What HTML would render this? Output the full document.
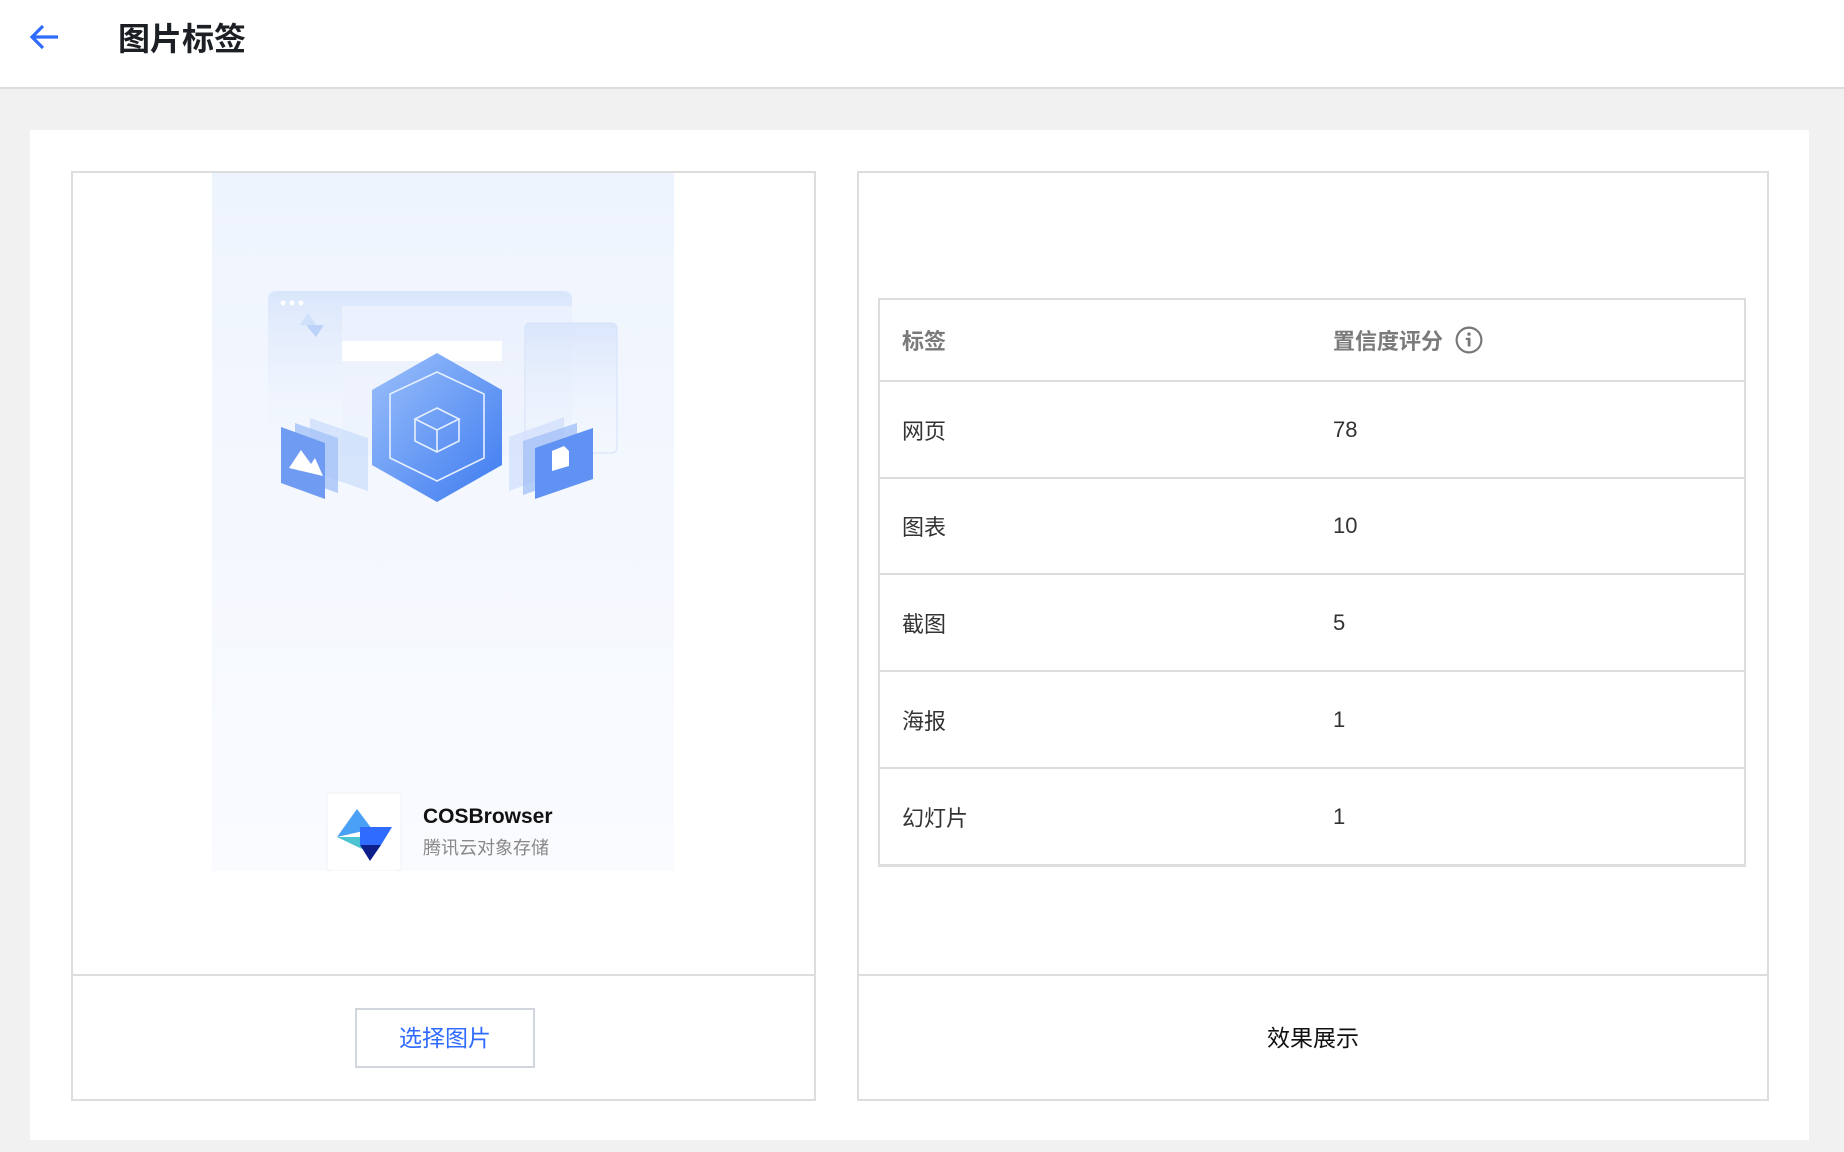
<!DOCTYPE html>
<html><head><meta charset="utf-8"><style>
*{margin:0;padding:0;box-sizing:border-box}
body{width:1844px;height:1152px;background:#f1f1f1;font-family:"Liberation Sans","Noto Sans CJK SC",sans-serif;position:relative;overflow:hidden;color:#222}
.hdr{position:absolute;left:0;top:0;width:1844px;height:89px;background:#fff;border-bottom:2px solid #ddd}
.title{position:absolute;left:118px;top:19px;font-size:32px;font-weight:bold;color:#1c1f23;line-height:40px}
.card{position:absolute;left:30px;top:130px;width:1779px;height:1010px;background:#fff}
.pl{position:absolute;left:71px;top:171px;width:745px;height:930px;border:2px solid #ddd}
.pr{position:absolute;left:857px;top:171px;width:912px;height:930px;border:2px solid #ddd}
.div{position:absolute;left:0;right:0;top:801px;border-top:2px solid #ddd}
.btn{position:absolute;left:282px;top:835px;width:180px;height:60px;border:2px solid #d0d5de;color:#2f6bff;font-size:23px;text-align:center;line-height:56px}
.eff{position:absolute;left:0;right:0;top:835px;text-align:center;font-size:23px;line-height:60px;color:#111}
.tbl{position:absolute;left:878px;top:298px;width:868px;height:569px;border:2px solid #ddd;border-bottom:3px solid #ddd}
.row{position:absolute;left:0;right:0;border-bottom:2px solid #ddd;font-size:22px;color:#333}
.row span{position:absolute;top:50%;transform:translateY(-50%)}
.c1{left:22px}.c2{left:453px}
.th{color:#7a7a7a;font-weight:bold}
</style></head><body>
<div class="hdr">
<svg style="position:absolute;left:28px;top:22px" width="34" height="30" viewBox="0 0 34 30"><path d="M30 15H5M15 4L4 15l11 11" stroke="#2f6bff" stroke-width="3.2" fill="none"/></svg>
<div class="title">图片标签</div>
</div>
<div class="card"></div>
<div class="pl">
<svg style="position:absolute;left:139px;top:0" width="462" height="698" viewBox="0 0 462 698">
<defs>
<linearGradient id="bg" x1="0" y1="0" x2="0" y2="1"><stop offset="0" stop-color="#eef4fe"/><stop offset="1" stop-color="#fafbfe"/></linearGradient>
<linearGradient id="hx" x1="0" y1="0" x2="1" y2="1"><stop offset="0" stop-color="#9cc0fa"/><stop offset="1" stop-color="#3d7bf0"/></linearGradient>
<linearGradient id="pn" x1="0" y1="0" x2="0" y2="1"><stop offset="0" stop-color="#d9e6fb"/><stop offset="1" stop-color="#f2f6fe" stop-opacity="0"/></linearGradient>
</defs>
<rect width="462" height="698" fill="url(#bg)"/>
<rect x="56" y="118" width="304" height="160" rx="8" fill="url(#pn)"/>
<circle cx="71" cy="130" r="2.5" fill="#fff"/><circle cx="80" cy="130" r="2.5" fill="#fff"/><circle cx="89" cy="130" r="2.5" fill="#fff"/>
<polygon points="88,152 96,140 104,152" fill="#cfe0fb"/><polygon points="94,152 112,152 104,164" fill="#bcd2f8"/>
<rect x="130" y="133" width="230" height="150" fill="#eef3fd" opacity=".8"/>
<rect x="130" y="168" width="160" height="20" fill="#fff"/>
<rect x="313" y="150" width="92" height="130" rx="5" fill="url(#pn)" stroke="#d5e2fa"/>
<polygon points="98,245 156,265 156,318 98,298" fill="#c9dbfb" opacity=".7"/>
<polygon points="83,250 126,265 126,320 83,305" fill="#a5c2f7" opacity=".8"/>
<polygon points="69,254 113,270 113,326 69,310" fill="#6f9cf2"/>
<polygon points="77,295 89,277 99,291 103,285 111,303" fill="#fff"/>
<polygon points="297,318 352,298 352,244 297,264" fill="#c9dbfb" opacity=".6"/>
<polygon points="311,322 365,303 365,250 311,268" fill="#a5c2f7" opacity=".8"/>
<polygon points="323,326 381,306 381,255 323,275" fill="#5f92f2"/>
<polygon points="340,298 340,278 352,273 357,278 357,293" fill="#fff"/>
<polygon points="225,180 290,217 290,292 225,329 160,292 160,217" fill="url(#hx)"/>
<polygon points="225,199 272,221 272,285 225,308 178,285 178,221" fill="none" stroke="#e6efff" stroke-width="1.6"/>
<path d="M225 235l22 11-22 11-22-11zM203 246v22l22 11 22-11v-22M225 257v22" fill="none" stroke="#e6efff" stroke-width="1.6"/>
<rect x="115" y="620" width="74" height="78" rx="4" fill="#fff" stroke="#eef0f4"/>
<polygon points="125,664 145,636 160,656" fill="#4aa0f4"/>
<polygon points="125,664 160,664 150,676" fill="#4cc3d1"/>
<polygon points="148,654 180,654 169,672 148,672" fill="#2f6bff"/>
<polygon points="148,672 169,672 158,688" fill="#0c1f8a"/>
<text x="211" y="650" font-family="Liberation Sans,sans-serif" font-size="21" font-weight="bold" fill="#111">COSBrowser</text>
<text x="211" y="681" font-family="Liberation Sans,Noto Sans CJK SC,sans-serif" font-size="18" fill="#888">腾讯云对象存储</text>
</svg>
<div class="div"></div>
<div class="btn">选择图片</div>
</div>
<div class="pr">
<div class="div"></div>
<div class="eff">效果展示</div>
</div>
<div class="tbl">
<div class="row th" style="top:0;height:82px"><span class="c1">标签</span><span class="c2">置信度评分 <svg style="vertical-align:-5px;margin-left:6px" width="28" height="28" viewBox="0 0 26 26"><circle cx="13" cy="13" r="11.5" fill="none" stroke="#777" stroke-width="2"/><rect x="11.8" y="11" width="2.6" height="8" fill="#777"/><rect x="10" y="11" width="4" height="2" fill="#777"/><circle cx="13" cy="7.5" r="1.6" fill="#777"/></svg></span></div>
<div class="row" style="top:82px;height:97px"><span class="c1">网页</span><span class="c2">78</span></div>
<div class="row" style="top:179px;height:96px"><span class="c1">图表</span><span class="c2">10</span></div>
<div class="row" style="top:275px;height:97px"><span class="c1">截图</span><span class="c2">5</span></div>
<div class="row" style="top:372px;height:97px"><span class="c1">海报</span><span class="c2">1</span></div>
<div class="row" style="top:469px;height:96px;border-bottom:none"><span class="c1">幻灯片</span><span class="c2">1</span></div>
</div>
</body></html>
